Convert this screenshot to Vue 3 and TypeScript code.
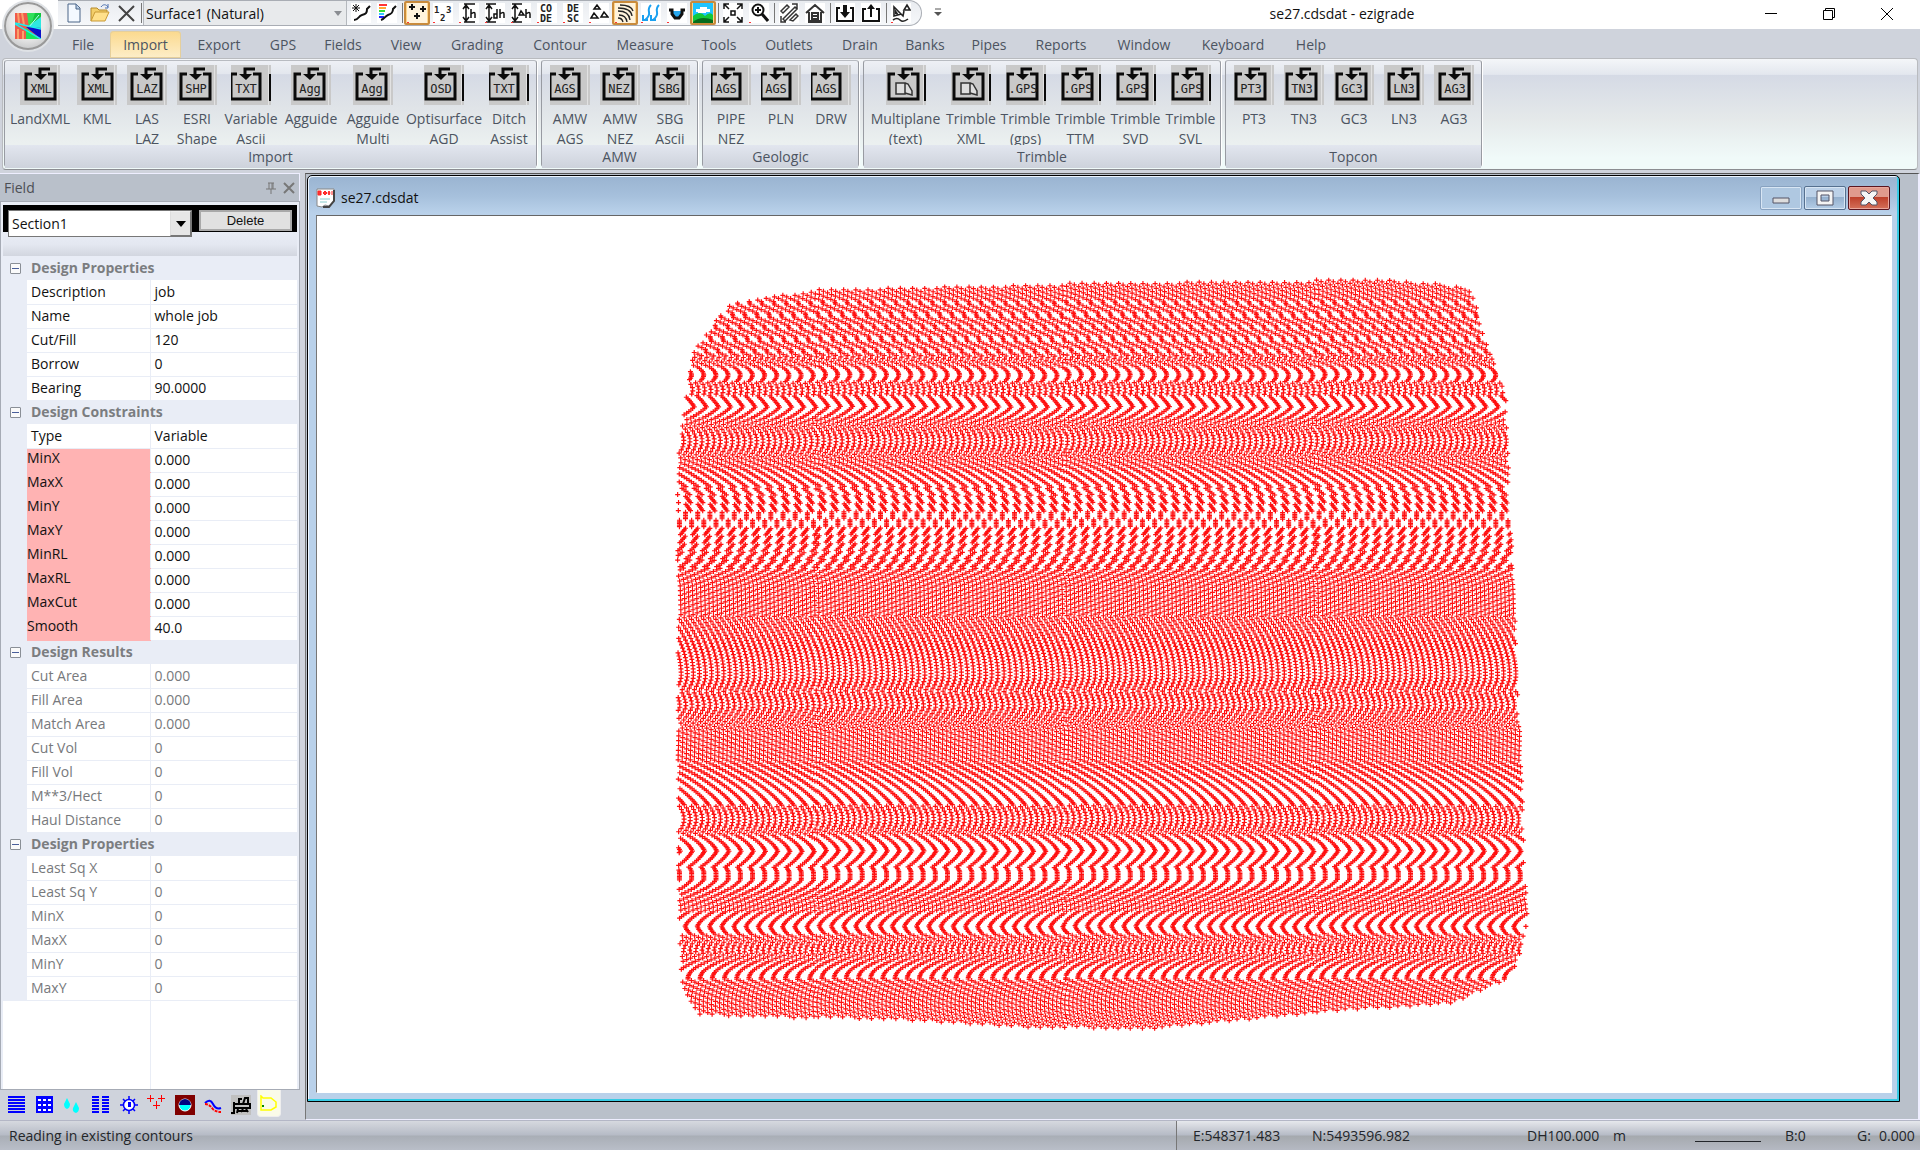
<script setup lang="ts">
import { ref } from 'vue'

interface Tool { id: string; label: string; art: string; active?: boolean; split?: boolean }
interface Command { glyph: string; lines: string[]; width: number; dx: number; bar?: boolean }
interface Panel { title: string; commands: Command[] }
interface Row { name: string; value: string; flag?: boolean }
interface Section { title: string; muted?: boolean; rows: Row[] }

const k = 'fill="none" stroke="#111" stroke-width="2"'
const red = '<path d="M0 19h2v1H0z" fill="#f33"/>'

const fileTools: Tool[] = [
  { id: 'new', label: 'New', art: '<path d="M4 1h8l4 4v14H4z" fill="#f4f9ff" stroke="#4a6487"/><path d="M12 1v5h4" fill="#b9cfe8" stroke="#4a6487"/>' },
  { id: 'open', label: 'Open', art: '<path d="M1 18V5h6l2 2h8v3" fill="#f3cf6a" stroke="#b58a2a"/><path d="M1 18L5 9h14l-4 9z" fill="#ffe08a" stroke="#c99a35"/><path d="M11 4c2-3 5-3 7 0m0-3v4h-3" fill="none" stroke="#4a6fae"/>' },
  { id: 'close', label: 'Close', art: '<path d="M3 3L18 18M18 3L3 18" fill="none" stroke="#444" stroke-width="2"/>' },
]

const drawTools: Tool[] = [
  { id: 'point', label: 'Point line', art: `<path d="M5 1v8M1 5h8M2 2l6 6M8 2L2 8" stroke="#111" fill="none"/><path d="M3 17c5 0 4-4 8-5s5-2 5-6l3-3" ${k}/>` },
  { id: 'ramp', label: 'Colour ramp', art: `<path d="M2 2h8" stroke="#f33" stroke-width="2"/><path d="M2 5h7" stroke="#fa3" stroke-width="2"/><path d="M2 8h6" stroke="#3d3" stroke-width="2"/><path d="M2 11h5" stroke="#3cf" stroke-width="2"/><path d="M2 14h5" stroke="#22f" stroke-width="2"/><path d="M4 17c4-1 4-4 7-5s5-2 5-6l3-3" ${k}/>` },
  { id: 'plus', label: 'Points', active: true, split: true, art: `<path d="M0 0h20v20H0z" fill="#fff3dc"/><path d="M5 1v6M2 4h6M16 3v6M13 6h6M10 10v6M7 13h6" ${k}/>${red}` },
  { id: 'number', label: 'Point numbers', art: `<g font-family="DejaVu Sans Mono, monospace" font-size="9" font-weight="bold" fill="#222"><text x="1" y="10">1</text><text x="13" y="10">3</text><text x="7" y="18">2</text></g>${red}` },
  { id: 'h', label: 'Heights', art: `<path d="M5 1h11M5 19h11M7 2v16M4 6l3-4 3 4M4 14l3 4 3-4M12 6v9M12 11q4-3 4 0v4" fill="none" stroke="#111" stroke-width="1.500"/>${red}` },
  { id: 'dh', label: 'Design heights', art: `<path d="M1 1h10M1 19h10M4 2v16M1 6l3-4 3 4M1 14l3 4 3-4M12 6v9H9v-4h3M15 6v9M15 11q4-3 4 0v4" fill="none" stroke="#111" stroke-width="1.500"/>${red}` },
  { id: 'ch', label: 'Change heights', art: `<path d="M1 1h10M1 19h10M4 2v16M1 6l3-4 3 4M1 14l3 4 3-4M8 12l2-4 3 4zM15 6v9M15 11q4-3 4 0v4" fill="none" stroke="#111" stroke-width="1.500"/>${red}` },
  { id: 'code', label: 'Codes', art: `<g font-family="DejaVu Sans Mono, monospace" font-size="10" font-weight="bold" fill="#222"><text x="3" y="9">CO</text><text x="3" y="19">DE</text></g>${red}` },
  { id: 'desc', label: 'Descriptions', art: `<g font-family="DejaVu Sans Mono, monospace" font-size="10" font-weight="bold" fill="#222"><text x="4" y="9">DE</text><text x="4" y="19">SC</text></g>${red}` },
  { id: 'tri', label: 'Triangles', art: `<path d="M5 6l3-4 3 4zM2 15l3-5 4 5zM12 14l3-5 4 5z" fill="none" stroke="#111" stroke-width="1.500"/>${red}` },
  { id: 'contour', label: 'Contours', active: true, art: `<path d="M0 0h20v20H0z" fill="#fff3dc"/><path d="M5 2q11 0 13 6M3 5q13 0 14 8M3 8q11 0 12 9M4 12q7 0 8 7M3 15q4 0 5 4" fill="none" stroke="#222" stroke-width="1.300"/>${red}` },
  { id: 'flow', label: 'Flow arrows', art: `<path d="M10 2q-3 3-2 7t-4 8M2 12v5h5M18 2q-3 3-2 7t-4 8M10 12v5h5" fill="none" stroke="#1aa0f0" stroke-width="2"/>${red}` },
  { id: 'pond', label: 'Ponding', art: `<path d="M5 8h10v4l-3 2H8l-3-2z" fill="#28a8f0"/><path d="M2 7h3v4l3 4h4l3-4V7h3" fill="none" stroke="#111" stroke-width="3"/>${red}` },
  { id: 'image', label: 'Image', active: true, art: '<path d="M0 0h20v20H0z" fill="#1fc4ff"/><path d="M3 6h4V4h7v2h3v3h-4v1H5V9H3z" fill="#fff"/><path d="M0 13q7-6 12 0 5-5 8-1v8H0z" fill="#12c83a"/><path d="M0 19q8-7 20-2v3H0z" fill="#066b1c"/>' },
  { id: 'extent', label: 'Zoom extents', split: true, art: '<path d="M1 6V1h5M14 1h5v5M19 14v5h-5M6 19H1v-5M1 1l5 5M19 1l-5 5M19 19l-5-5M1 19l5-5M8 8h4v4H8z" fill="none" stroke="#111" stroke-width="1.500"/>' },
  { id: 'zoom', label: 'Zoom', art: `<circle cx="9" cy="7" r="5.500" ${k}/><path d="M6 7h6M9 4v6" stroke="#111" stroke-width="2" fill="none"/><path d="M13 11l6 7" stroke="#111" stroke-width="3"/>${red}` },
  { id: 'section', label: 'Section', split: true, art: '<path d="M2 8l6-6 2 2-6 6zM4 16L16 4l2 2L6 18zM11 17l6-6 2 2-5 5zM13 1h5v5M2 13v6h5" fill="none" stroke="#333" stroke-width="1.500"/>' },
  { id: 'home', label: 'Home', art: '<path d="M1 10L10 2l9 8M4 9v10h12V9M7 10h6v6H7zM7 13h6M4 18h12" fill="none" stroke="#333" stroke-width="2"/>' },
  { id: 'in', label: 'Import file', split: true, art: '<path d="M5 5H2v13h16V5h-3" fill="none" stroke="#111" stroke-width="2"/><path d="M8 2h4v7h3l-5 6-5-6h3z" fill="#111"/>' },
  { id: 'out', label: 'Export file', art: '<path d="M5 6H2v12h16V6h-3" fill="none" stroke="#111" stroke-width="2"/><path d="M9 14V6H6l4-5 4 5h-3v8z" fill="#111"/>' },
  { id: 'survey', label: 'Survey', split: true, art: `<path d="M3 4v9l7-2zM13 7l3-5 3 5zM3 4l9 9 1-5M2 17q4-3 7 0t8-1" fill="none" stroke="#222" stroke-width="1.600"/><path d="M4 6v5l4 1z" fill="#222"/>${red}` },
]

const menus: { name: string; width: number }[] = [
  { name: 'File', width: 54 }, { name: 'Import', width: 71 }, { name: 'Export', width: 76 }, { name: 'GPS', width: 52 },
  { name: 'Fields', width: 68 }, { name: 'View', width: 58 }, { name: 'Grading', width: 84 }, { name: 'Contour', width: 82 },
  { name: 'Measure', width: 88 }, { name: 'Tools', width: 60 }, { name: 'Outlets', width: 80 }, { name: 'Drain', width: 62 },
  { name: 'Banks', width: 68 }, { name: 'Pipes', width: 60 }, { name: 'Reports', width: 84 }, { name: 'Window', width: 82 },
  { name: 'Keyboard', width: 96 }, { name: 'Help', width: 60 },
]
const activeMenu = ref('Import')

const cmd = (glyph: string, text: string, width: number, dx: number, bar = false): Command =>
  ({ glyph, lines: text.split('|'), width, dx, bar })

const panels: Panel[] = [
  { title: 'Import', commands: [
    cmd('XML', 'LandXML', 64, 0), cmd('XML', 'KML', 50, 0), cmd('LAZ', 'LAS|LAZ', 50, -1), cmd('SHP', 'ESRI|Shape', 50, -2),
    cmd('TXT', 'Variable|Ascii', 58, -6, true), cmd('Agg', 'Agguide', 62, -2), cmd('Agg', 'Agguide|Multi', 62, -2),
    cmd('OSD', 'Optisurface|AGD', 80, -4, true), cmd('TXT', 'Ditch|Assist', 50, -6, true) ] },
  { title: 'AMW', commands: [cmd('AGS', 'AMW|AGS', 50, -6), cmd('NEZ', 'AMW|NEZ', 50, -2), cmd('SBG', 'SBG|Ascii', 50, -2)] },
  { title: 'Geologic', commands: [cmd('AGS', 'PIPE|NEZ', 50, -6), cmd('AGS', 'PLN', 50, -6), cmd('AGS', 'DRW', 50, -6)] },
  { title: 'Trimble', commands: [
    cmd('', 'Multiplane|(text)', 77, -3, true), cmd('', 'Trimble|XML', 54, -3, true), cmd('.GPS', 'Trimble|(gps)', 55, -4, true),
    cmd('.GPS', 'Trimble|TTM', 55, -4, true), cmd('.GPS', 'Trimble|SVD', 55, -4, true), cmd('.GPS', 'Trimble|SVL', 55, -4, true) ] },
  { title: 'Topcon', commands: [cmd('PT3', 'PT3', 50, -4), cmd('TN3', 'TN3', 50, -3), cmd('GC3', 'GC3', 50, -3), cmd('LN3', 'LN3', 50, -1), cmd('AG3', 'AG3', 50, 0)] },
]

const rows = (text: string, flag = false): Row[] =>
  text.split('|').map(pair => { const [name, value] = pair.split('='); return { name, value, flag } })

const sections: Section[] = [
  { title: 'Design Properties', rows: rows('Description=job|Name=whole job|Cut/Fill=120|Borrow=0|Bearing=90.0000') },
  { title: 'Design Constraints', rows: [...rows('Type=Variable'), ...rows('MinX=0.000|MaxX=0.000|MinY=0.000|MaxY=0.000|MinRL=0.000|MaxRL=0.000|MaxCut=0.000|Smooth=40.0', true)] },
  { title: 'Design Results', muted: true, rows: rows('Cut Area=0.000|Fill Area=0.000|Match Area=0.000|Cut Vol=0|Fill Vol=0|M**3/Hect=0|Haul Distance=0') },
  { title: 'Design Properties', muted: true, rows: rows('Least Sq X=0|Least Sq Y=0|MinX=0|MaxX=0|MinY=0|MaxY=0') },
]

const dockTools: Tool[] = [
  { id: 'rows', label: 'Rows', art: '<path d="M1 2h17M1 5h17M1 8h17M1 11h17M1 14h17M1 17h17" stroke="#00f" stroke-width="2"/>' },
  { id: 'grid', label: 'Grid', art: '<path d="M1 1h17v17H1z" fill="#00f"/><path d="M3 4h3v2H3zM8 4h3v2H8zM13 4h3v2h-3zM3 9h3v2H3zM8 9h3v2H8zM13 9h3v2h-3zM3 14h3v2H3zM8 14h3v2H8zM13 14h3v2h-3z" fill="#fff"/>' },
  { id: 'drops', label: 'Water', art: '<path d="M4 3l3 6q0 4-3 5-3-1-3-5zM13 7l3 6q0 4-3 5-4-1-3-5z" fill="#0ff"/>' },
  { id: 'cols', label: 'Columns', art: '<path d="M1 2h7M1 5h7M1 8h7M1 11h7M1 14h7M1 17h7M11 2h7M11 5h7M11 8h7M11 11h7M11 14h7M11 17h7" stroke="#00f" stroke-width="2"/>' },
  { id: 'gear', label: 'Settings', art: '<circle cx="10" cy="10" r="5.500" fill="#fff" stroke="#00f" stroke-width="1.500"/><path d="M10 1v3M10 16v3M1 10h3M16 10h3M4 4l2 2M16 4l-2 2M4 16l2-2M16 16l-2-2" stroke="#00f" stroke-width="1.500"/><path d="M9 7h3v5H9z" fill="#00f"/>' },
  { id: 'points', label: 'Points', art: '<path d="M3.500 0v7M0 3.500h7M14.500 0v7M11 3.500h7M9.500 6v8M6 10.500h7" stroke="#f00" fill="none"/>' },
  { id: 'pipe', label: 'Pipe', art: '<path d="M0 0h20v20H0z" fill="#800000"/><circle cx="10" cy="10" r="6" fill="#0ff" stroke="#fff"/><path d="M4 10a6 6 0 0 1 12 0z" fill="#000080"/>' },
  { id: 'profile', label: 'Profile', art: '<path d="M2 8q5-5 8 1t8 4" fill="none" stroke="#00f" stroke-width="2"/><path d="M2 9q4 0 7 4t9 4" fill="none" stroke="#f00" stroke-width="2" stroke-dasharray="3 1"/>' },
  { id: 'machine', label: 'Machine', art: '<path d="M0 0h20v20H0z" fill="#c0c0c0"/><path d="M3 7v11H0M4 9h15v4H4M8 9V4h3M12 9l2-6h3v6M7 14l-1 4M12 14l-2 3M15 14l2 3M6 16h10" fill="none" stroke="#000" stroke-width="2"/>' },
  { id: 'field', label: 'Field', active: true, art: '<path d="M2 1l2 2h8l5 4v5l-5 3H2z" fill="none" stroke="#ff0" stroke-width="1.500"/><path d="M3 10h2v2H3z" fill="#080"/>' },
]

const surface = ref('Surface1 (Natural)')
const section = ref('Section1')

/* Boundary of the surveyed block, in view units. */
const boundary: [number, number][] = [
  [412, 87], [436, 81], [504, 72], [624, 69], [784, 65], [984, 63], [1064, 61], [1124, 66], [1156, 70], [1162, 94],
  [1174, 129], [1184, 159], [1191, 184], [1192, 224], [1194, 284], [1197, 334], [1202, 464], [1206, 544], [1209, 644],
  [1213, 694], [1210, 714], [1204, 739], [1200, 754], [1192, 762], [1164, 774], [1139, 786], [984, 797], [834, 812],
  [734, 811], [584, 803], [384, 798], [376, 789], [367, 774], [364, 754], [362, 684], [361, 384], [361, 239],
  [368, 194], [373, 154], [374, 139], [387, 119],
]

/* Sideways step between successive runs, as a share of the point spacing: [from, to, step at start, step at end]. */
const bands: [number, number, number, number][] = [
  [55, 84, 0.42, 0.3], [139, 150, 0.45, 0.3], [150, 164, 0.2, -0.15], [164, 179, -0.35, -0.6],
  [179, 190, 0.14, 0.08], [190, 201, -0.12, -0.25], [201, 224, -0.3, -0.5], [224, 254, -0.5, -0.75],
  [254, 279, 0.22, 0.15], [279, 295, 0.11, 0.09], [295, 311, 0, 0], [311, 330, -0.1, -0.12],
  [330, 352, -0.14, -0.22], [352, 370, -0.27, -0.33], [370, 400, -0.33, -0.33], [400, 458, -0.4, -0.5], [458, 475, -0.5, -0.6],
  [475, 490, -0.42, -0.5], [490, 515, -0.56, -0.65], [515, 545, -0.67, -0.67], [545, 589, -0.72, -0.9],
  [589, 603, -0.4, -0.5], [603, 619, -0.5, -0.65], [619, 635, -0.78, -0.95], [635, 650, -0.08, -0.18],
  [650, 656, 0.16, 0], [656, 664, 0, 0], [664, 672, -0.12, -0.2], [672, 696, -0.25, -0.35],
  [696, 710, -0.22, -0.06], [710, 718, 0.04, 0.15], [718, 735, 0.3, 0.5], [735, 752, 0.6, 0.8],
  [752, 762, -0.18, 0], [762, 830, 0.28, 0.42],
]

function stepAt(y: number): number {
  if (y >= 84 && y < 139) return (y - 84) % 12 < 4 ? 0.04 : 0.3
  const band = bands.find(b => y >= b[0] && y < b[1])
  if (!band) return 0.3
  return band[2] + (band[3] - band[2]) * (y - band[0]) / (band[1] - band[0])
}

function spanAt(y: number): [number, number] | null {
  const xs: number[] = []
  boundary.forEach(([x1, y1], i) => {
    const [x2, y2] = boundary[(i + 1) % boundary.length]
    if ((y1 <= y) !== (y2 <= y)) xs.push(x1 + (x2 - x1) * (y - y1) / (y2 - y1))
  })
  return xs.length < 2 ? null : [Math.min(...xs), Math.max(...xs)]
}

function surveyPath(): string {
  const spacing = 12.2
  const run = 1.6
  let phase = 3
  let block = 0
  let d = ''
  for (let y = 61; y < 814; y += run) {
    let s = stepAt(y)
    if (y >= 262 && y < 352) {
      const now = Math.floor((y - 262) / 8)
      if (now !== block) s += 0.5
      block = now
    }
    phase = (((phase + s * spacing) % spacing) + spacing) % spacing
    const span = spanAt(y)
    if (!span) continue
    for (let x = Math.floor(span[0] / spacing) * spacing + phase; x <= span[1]; x += spacing) {
      if (x < span[0]) continue
      const px = x.toFixed(1)
      const py = (y + 0.5 + ((x * 0.004) % 1)).toFixed(1)
      d += `M${px} ${py}m-2.5 0h5m-2.5-2.5v5`
    }
  }
  return d
}

const survey = surveyPath()
</script>

<template>
  <div class="app">
    <header class="titlebar">
      <div class="quick">
        <button v-for="t in fileTools" :key="t.id" class="tool" :aria-label="t.label"><svg viewBox="0 0 20 20" v-html="t.art" /></button>
        <i class="split" />
        <label class="surface">
          <select v-model="surface" aria-label="Surface"><option>Surface1 (Natural)</option></select>
          <svg viewBox="0 0 8 5"><path d="M0 0h8L4 5z" fill="#8a8d92" /></svg>
        </label>
        <template v-for="t in drawTools" :key="t.id">
          <i v-if="t.split" class="split" />
          <button class="tool pic" :class="{ on: t.active }" :aria-label="t.label"><svg viewBox="0 0 20 20" v-html="t.art" /></button>
        </template>
      </div>
      <button class="more" aria-label="Customise toolbar"><svg viewBox="0 0 8 8"><path d="M1 1h6" stroke="#555" /><path d="M0 4h8L4 8z" fill="#555" /></svg></button>
      <h1>se27.cdsdat - ezigrade</h1>
      <div class="caption-buttons">
        <button aria-label="Minimise"><svg viewBox="0 0 14 14"><path d="M1 6.500h12" stroke="#000" /></svg></button>
        <button aria-label="Restore"><svg viewBox="0 0 14 14"><path d="M1.500 3.500h9v9h-9zM3.500 3V1.500h9v9H11" fill="none" stroke="#000" /></svg></button>
        <button aria-label="Close"><svg viewBox="0 0 14 14"><path d="M1 1l12 12M13 1L1 13" stroke="#000" /></svg></button>
      </div>
    </header>

    <button class="orb" aria-label="Application menu">
      <svg viewBox="0 0 26 26">
        <path d="M0 0h26v26H0z" fill="#f05a4a" />
        <path d="M3 0l1 10M7 0l2 12M3 16v10M8 18v8" stroke="#f9a06a" stroke-width="2" />
        <path d="M12 0h14v4L14 15z" fill="#2fe05a" /><path d="M20 0h6v3L16 13z" fill="#12c43c" />
        <path d="M26 4v11l-14-1z" fill="#2fe8e0" /><path d="M24 2L14 14" stroke="#bff" />
        <path d="M11 15l13 11H11z" fill="#19e65a" /><path d="M11 14l15 1v11z" fill="#0a10c8" />
        <path d="M0 10l26 6M0 11l26 15" stroke="#18f0f0" stroke-width="1.500" />
      </svg>
    </button>

    <nav class="menu">
      <button v-for="m in menus" :key="m.name" :class="{ current: m.name === activeMenu }" :style="{ width: m.width + 'px' }" @click="activeMenu = m.name">{{ m.name }}</button>
    </nav>

    <div class="ribbon">
      <section v-for="p in panels" :key="p.title" class="panel">
        <div class="commands">
          <button v-for="(c, i) in p.commands" :key="i" class="command" :style="{ width: c.width + 'px' }">
            <svg class="glyph" viewBox="0 0 40 40">
              <path d="M0 0h40v40H0z" fill="#c9c9c9" />
              <path d="M37 0h1v40h-1z" fill="#e2e2e2" />
              <g :transform="`translate(${c.dx} 0)`">
                <path d="M12 9H6v25h29V9h-7" fill="none" stroke="#0a0a0a" stroke-width="3" />
                <path d="M20 12V4h10" fill="none" stroke="#0a0a0a" stroke-width="3" />
                <path d="M14 9h13l-6 6z" fill="#0a0a0a" />
                <path v-if="!c.glyph" d="M13 18h9v11h-9zM22 18l3 1 4 7v4l-7-2" fill="#dedede" stroke="#333" stroke-width="1.500" />
                <text v-else x="21" y="28" text-anchor="middle">{{ c.glyph }}</text>
              </g>
              <path v-if="c.bar" d="M38 9h2v27h-2z" fill="#0a0a0a" />
            </svg>
            <span class="label"><span v-for="l in c.lines" :key="l">{{ l }}</span></span>
          </button>
        </div>
        <h2>{{ p.title }}</h2>
      </section>
    </div>

    <div class="work">
      <aside class="dock">
        <div class="dock-caption">
          <h2>Field</h2>
          <button aria-label="Pin"><svg viewBox="0 0 12 12"><path d="M3 1h6M4 1v6M7 1v6M8 1v6M1 7h10M6 7v5" fill="none" stroke="#777" /></svg></button>
          <button aria-label="Close panel"><svg viewBox="0 0 12 12"><path d="M1 1l10 10M11 1L1 11" stroke="#777" stroke-width="2" /></svg></button>
        </div>
        <div class="dock-body">
          <div class="chooser">
            <label class="section">
              <select v-model="section" aria-label="Section"><option>Section1</option></select>
              <span class="drop"><svg viewBox="0 0 10 6"><path d="M0 0h10L5 6z" /></svg></span>
            </label>
            <button class="delete">Delete</button>
          </div>
          <div class="sheet">
            <table>
              <colgroup><col class="c-fold"><col class="c-name"><col></colgroup>
              <tbody v-for="(s, i) in sections" :key="i" :class="{ muted: s.muted }">
                <tr class="group">
                  <td><button class="fold" aria-label="Collapse"><svg viewBox="0 0 7 1"><path d="M0 0h7v1H0z" fill="#4a5f9a" /></svg></button></td>
                  <th colspan="2">{{ s.title }}</th>
                </tr>
                <tr v-for="r in s.rows" :key="r.name" :class="{ flag: r.flag }">
                  <td /><td class="name">{{ r.name }}</td><td class="value">{{ r.value }}</td>
                </tr>
              </tbody>
            </table>
            <div class="blank"><i /></div>
          </div>
        </div>
        <div class="dock-tools">
          <button v-for="t in dockTools" :key="t.id" :class="{ on: t.active }" :aria-label="t.label"><svg viewBox="0 0 20 20" v-html="t.art" /></button>
        </div>
      </aside>

      <main class="desk">
        <article class="child">
          <div class="child-caption">
            <svg class="doc" viewBox="0 0 19 20">
              <path d="M1 1h17v12l-5 5-4-1-3 2-5-1z" fill="#fff" stroke="#888" /><path d="M18 2v11l-5 6H7" fill="none" stroke="#444" stroke-width="2" />
              <path d="M2 3h3v4H2zM7 5l2-2 2 2-2 2zM12 5l1-2 1 2-1 2zM16 3v4" fill="#f33" stroke="#f22" /><path d="M4 11h10M4 14h7" stroke="#8cc" />
            </svg>
            <h2>se27.cdsdat</h2>
            <button class="min" aria-label="Minimise window"><svg viewBox="0 0 18 16"><path d="M1 8h16v5H1z" fill="#ddd" stroke="#556" /></svg></button>
            <button aria-label="Maximise window"><svg viewBox="0 0 18 16"><path d="M1 1h16v14H1zM5 5v6h8V5z" fill="#f4f4f4" stroke="#556" fill-rule="evenodd" /></svg></button>
            <button class="close" aria-label="Close window"><svg viewBox="0 0 18 16"><path d="M1 1h5l3 3 3-3h5v3l-4 4 4 4v3h-5l-3-3-3 3H1v-3l4-4-4-4z" fill="#f6f6f6" stroke="#556" /></svg></button>
          </div>
          <div class="view">
            <svg viewBox="0 0 1576 875"><path :d="survey" fill="none" stroke="#ff1010" stroke-width="1.200" /></svg>
          </div>
        </article>
      </main>
    </div>

    <footer class="status">
      <span class="message">Reading in existing contours</span>
      <div class="readout">
        <span>E:548371.483</span><span>N:5493596.982</span><span>DH100.000</span><span>m</span><i /><span>B:0</span><span>G:</span><span>0.000</span>
      </div>
    </footer>
  </div>
</template>

<style>
body { margin: 0; overflow: hidden; }
</style>

<style scoped>
.app { position: relative; display: flex; flex-direction: column; height: 100vh; background: #cfd3dc; font-family: "Open Sans", "Noto Sans", sans-serif; font-size: 14px; line-height: 20px; color: #111; }
.app * { box-sizing: border-box; }
button, select { font: inherit; color: inherit; padding: 0; margin: 0; border: 0; background: none; }
h1, h2 { margin: 0; font-size: 14px; font-weight: 400; }
svg { display: block; }

.titlebar { display: flex; align-items: flex-start; flex: none; height: 29px; background: #fff; }
.quick { display: flex; align-items: stretch; height: 26px; margin-left: 58px; padding: 0 7px 0 3px; border: 1px solid #a9adb4; border-width: 1px 1px 1px 0; border-radius: 0 14px 14px 0; background: linear-gradient(#e9ecf0, #f6f8fa); }
.tool { display: flex; align-items: center; justify-content: center; flex: none; width: 26px; height: 24px; }
.tool svg { width: 20px; height: 20px; }
.pic svg { background: #fff; }
.tool.on { border: 2px solid #c98b3c; border-radius: 2px; background: #ffd58a; }
.split { flex: none; width: 1px; margin: 2px 1px 2px 2px; background: #777; }
.surface { position: relative; display: flex; width: 204px; margin-right: 1px; border: 1px solid #b4b8bd; border-width: 0 1px; background: #e8eaec; }
.surface select { appearance: none; width: 100%; padding: 1px 2px 0; background: none; }
.surface svg { position: absolute; right: 4px; top: 10px; width: 8px; height: 5px; }
.more { width: 8px; margin: 8px 0 0 12px; }
.titlebar h1 { flex: 1; text-align: center; line-height: 28px; color: #111; }
.caption-buttons { display: flex; margin-right: 4px; }
.caption-buttons button { display: flex; align-items: center; justify-content: center; width: 58px; height: 28px; }
.caption-buttons svg { width: 14px; height: 14px; }

.orb { position: absolute; left: 4px; top: 2px; display: flex; align-items: center; justify-content: center; width: 48px; height: 48px; border: 2px solid #999; border-radius: 50%; background: radial-gradient(circle at 50% 40%, #fff, #e8e8e8 50%, #b4b6b8); box-shadow: 0 0 0 2px #dfe2e6; }
.orb svg { width: 26px; height: 26px; }

.menu { display: flex; flex: none; height: 29px; padding: 2px 0 0 56px; }
.menu button { flex: none; color: #4c5461; border-radius: 4px 4px 0 0; }
.menu .current { background: linear-gradient(#fbd98d, #fdeec9); box-shadow: inset 0 0 0 1px #e5cf9c; }

.ribbon { display: flex; flex: none; gap: 4px; height: 112px; margin: 0 2px; padding: 1px 1px 2px; border: 1px solid #b9bbbf; border-bottom-color: #8b8d91; border-radius: 4px; background: linear-gradient(#f4f6f9, #e3e7ee 14%, #d5dae5 15%, #e5e9ea 55%, #f0faf9 90%); }
.panel { display: flex; flex-direction: column; border: 1px solid #989ba2; border-top-color: #b8bbc1; border-radius: 3px; box-shadow: 1px 0 #fff; background: linear-gradient(#eef0f5, #e3e7ee 12%, #d5dae5 13%, #e0e4e8 45%, #ebf0f0 78%); }
.commands { display: flex; height: 84px; padding: 4px 2px 0 3px; }
.command { display: flex; flex-direction: column; align-items: center; flex: none; color: #4c5461; }
.glyph { flex: none; width: 40px; height: 40px; overflow: hidden; }
.glyph text { font: 12px "DejaVu Sans Mono", monospace; fill: #222; }
.label { display: flex; flex-direction: column; align-items: center; height: 40px; padding-top: 4px; overflow-y: clip; white-space: nowrap; }
.panel h2 { flex: 1; line-height: 23px; text-align: center; color: #4c5461; background: linear-gradient(#e2e6ef, #cdd2db); }

.work { display: flex; flex: 1; min-height: 0; padding-top: 3px; }
.dock { display: flex; flex-direction: column; flex: none; width: 300px; margin-right: 5px; }
.dock-caption { display: flex; align-items: center; flex: none; height: 28px; padding: 0 4px; border: 1px solid #eef; border-width: 1px 1px 0 0; background: #b9c0ca; color: #4c4f55; gap: 6px; }
.dock-caption h2 { flex: 1; }
.dock-caption svg { width: 12px; height: 12px; }
.dock-body { display: flex; flex-direction: column; flex: 1; min-height: 0; padding: 3px 2px 0; border: 1px solid #a6abb5; background: #e9edf6; }
.chooser { display: flex; align-items: flex-start; flex: none; height: 51px; padding: 5px 5px 0; gap: 7px; background: linear-gradient(#000 27px, #e9edf6 27px, #e3e7f0 40px, #d2d6df 51px); }
.section { display: flex; width: 184px; height: 27px; background: #fff; border: 1px solid #777; }
.section select { appearance: none; flex: 1; min-width: 0; padding: 1px 0 0 3px; background: none; }
.drop { display: flex; align-items: center; justify-content: center; width: 21px; border: 1px solid; border-color: #eee #777 #777 #ddd; background: #e6e6e6; }
.drop svg { width: 10px; height: 6px; }
.delete { flex: 1; height: 21px; border: 2px solid #a9a9a9; background: #e1e1e1; font: 13px "Liberation Sans", sans-serif; }
.sheet { display: flex; flex-direction: column; flex: 1; min-height: 0; background: #fff; }
table { width: 100%; border-collapse: collapse; table-layout: fixed; background: #e9edf6; }
.c-fold { width: 24px; }
.c-name { width: 123px; }
tr { height: 24px; }
td, th { padding: 0; text-align: left; vertical-align: middle; white-space: nowrap; }
th { color: #7b7d80; font-weight: 700; padding-left: 4px; }
.fold { display: flex; align-items: center; justify-content: center; width: 11px; height: 11px; margin-left: 7px; border: 1px solid #8a8f96; border-radius: 1px; background: #fafafa; }
.fold svg { width: 7px; height: 1px; }
.name, .value { padding-left: 4px; background: #fff; border-bottom: 1px solid #e9edf6; }
.value { border-left: 1px solid #e9edf6; }
.muted .name, .muted .value { color: #77797c; }
.flag .name { padding: 0; line-height: 18px; vertical-align: top; background: #ffb3b3; border-bottom-color: #ffb3b3; }
.blank { display: flex; flex: 1; padding-left: 147px; }
.blank i { width: 1px; background: #e9edf6; }
.dock-tools { display: flex; flex: none; height: 30px; padding: 0 3px; background: #cfd3dc; }
.dock-tools button { display: flex; justify-content: center; width: 28px; height: 27px; padding-top: 5px; }
.dock-tools svg { width: 20px; height: 20px; }
.dock-tools .on { width: 24px; margin-left: 2px; border: 1px solid #eee; border-top: 0; border-radius: 0 0 4px 4px; background: #fafbe8; }

.desk { display: flex; flex: 1; min-width: 0; padding: 1px 18px 17px 1px; border: 1px solid #555; border-width: 1px 2px 1px 1px; border-color: #555 #eef #eef #777; background: #b9c0ca; }
.child { display: flex; flex-direction: column; flex: 1; min-width: 0; padding: 2px 7px 8px 8px; border: 1px solid #000; border-radius: 5px 5px 0 0; box-shadow: inset -2px -2px #38cbe4, inset 1px 1px #eef6ff; background: linear-gradient(#9ab4d1, #a6c0dc 20px, #b9d1ea 37px); }
.child-caption { display: flex; align-items: center; flex: none; height: 37px; padding: 2px 2px 0 0; gap: 2px; }
.doc { width: 19px; height: 20px; margin: 0 4px 0 0; }
.child-caption h2 { flex: 1; }
.child-caption button { display: flex; align-items: center; justify-content: center; width: 42px; height: 24px; border: 1px solid #56708f; border-radius: 2px; box-shadow: inset 0 0 0 1px #d8e6f4; background: linear-gradient(#bcd1e8 45%, #93afcd 45%, #b4cde6); }
.child-caption .min { border-color: #88a2c0; background: #afc8e1; }
.child-caption .close { border-color: #5a1520; box-shadow: inset 0 0 0 1px #eaa79d; background: linear-gradient(#e09a8d 45%, #bd3e29 45%, #d4705a); }
.child-caption button svg { width: 18px; height: 16px; }
.view { flex: 1; min-height: 0; border: 1px solid #777; border-color: #666 #fff #fff #777; background: #fff; }
.view svg { width: 100%; height: 100%; }

.status { display: flex; flex: none; height: 30px; border-top: 1px solid #b4b7c6; background: linear-gradient(#e6e8ec, #b6bbc6 14px, #a5a9ae 15px, #b5b9c3); color: #23262a; line-height: 30px; }
.message { flex: 1; padding-left: 9px; background: linear-gradient(#d6d9df, #b6bbc6 14px, #a9aeb6 15px, #b9bec8); }
.readout { display: grid; grid-template-columns: 119px 215px 86px 82px 90px 72px 22px 41px; padding-left: 16px; border-left: 1px solid #777; }
.readout i { width: 66px; height: 21px; border-bottom: 1px solid #23262a; }
</style>
